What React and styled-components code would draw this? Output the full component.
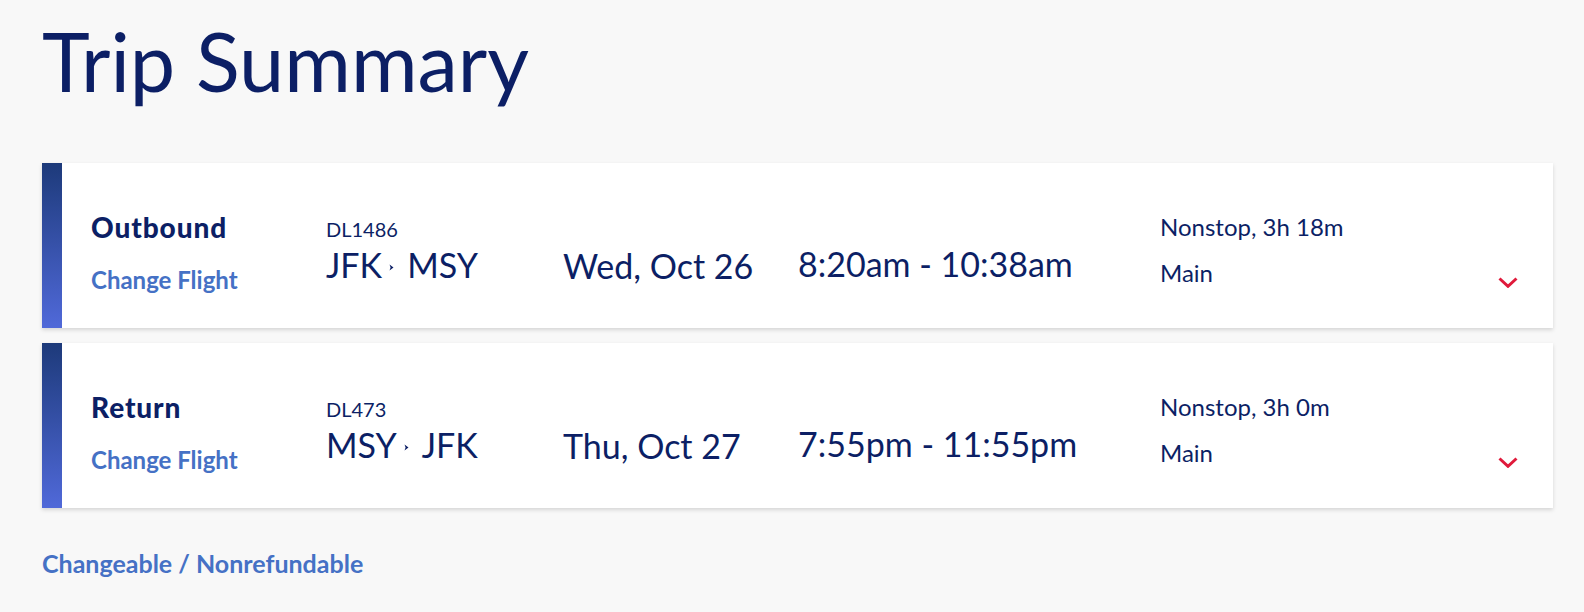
import React from 'react';
import styled, { createGlobalStyle } from 'styled-components';

const GlobalStyle = createGlobalStyle`
  html, body {
    margin: 0;
    padding: 0;
    background: #f8f8f8;
  }
  body {
    font-family: Lato, "Open Sans", sans-serif;
    color: #0c1f65;
  }
`;

const Page = styled.div`
  padding: 13px 31px 0 42px;
`;

const Title = styled.h1`
  margin: 0 0 54px;
  font-size: 81px;
  line-height: 96px;
  font-weight: 400;
  color: #0c1f65;
`;

const CardList = styled.div`
  display: flex;
  flex-direction: column;
  gap: 15px;
`;

const Card = styled.div`
  display: flex;
  min-height: 165px;
  background: #fff;
  box-shadow: 0 2px 4px rgba(0, 0, 0, 0.14);
`;

const Accent = styled.div`
  width: 20px;
  flex: none;
  background: linear-gradient(180deg, #1d3a7a 0%, #5069d9 100%);
`;

const Content = styled.div`
  flex: 1;
  display: grid;
  grid-template-columns: 235px 237px 235px 362px 1fr 20px;
  align-items: start;
  padding: 48px 35px 0 29px;
`;

const Column = styled.div`
  display: flex;
  flex-direction: column;
  padding-top: ${({ offset }) => offset || 0}px;
`;

const Direction = styled.div`
  font-size: 28px;
  line-height: 32px;
  font-weight: 900;
  letter-spacing: 0.9px;
`;

const ChangeLink = styled.a`
  margin-top: 22px;
  font-size: 24px;
  line-height: 30px;
  font-weight: 700;
  color: #4571c5;
  text-decoration: none;
  cursor: pointer;
`;

const FlightNo = styled.div`
  margin-top: 6px;
  font-size: 20px;
  line-height: 24px;
`;

const Route = styled.div`
  display: flex;
  align-items: center;
  margin-top: 4px;
  font-size: 34px;
  line-height: 40px;
`;

const RouteArrow = styled.svg`
  width: 5px;
  height: 7px;
  margin: 5px 13px 0 7px;
  flex: none;
`;

const BigText = styled.div`
  font-size: 34px;
  line-height: 40px;
  white-space: nowrap;
`;

const InfoText = styled.div`
  margin-top: ${({ gap }) => gap}px;
  font-size: 24px;
  line-height: 28px;
  white-space: nowrap;
`;

const Chevron = styled.svg`
  width: 20px;
  height: 11px;
  margin-top: 66px;
  cursor: pointer;
`;

const Fare = styled.a`
  display: block;
  margin-top: 40px;
  font-size: 25px;
  line-height: 30px;
  font-weight: 700;
  color: #4571c5;
  text-decoration: none;
`;

const flights = [
  {
    label: 'Outbound',
    number: 'DL1486',
    from: 'JFK',
    to: 'MSY',
    date: 'Wed, Oct 26',
    time: '8:20am - 10:38am',
    duration: 'Nonstop, 3h 18m',
    cabin: 'Main',
  },
  {
    label: 'Return',
    number: 'DL473',
    from: 'MSY',
    to: 'JFK',
    date: 'Thu, Oct 27',
    time: '7:55pm - 11:55pm',
    duration: 'Nonstop, 3h 0m',
    cabin: 'Main',
  },
];

function FlightCard({ flight }) {
  return (
    <Card>
      <Accent />
      <Content>
        <Column>
          <Direction>{flight.label}</Direction>
          <ChangeLink>Change Flight</ChangeLink>
        </Column>
        <Column>
          <FlightNo>{flight.number}</FlightNo>
          <Route>
            {flight.from}
            <RouteArrow viewBox="0 0 5 7">
              <path d="M0.5 0.5 L4.5 3.5 L0.5 6.5 L1.6 3.5 Z" fill="#0c1f65" />
            </RouteArrow>
            {flight.to}
          </Route>
        </Column>
        <Column offset={35}>
          <BigText>{flight.date}</BigText>
        </Column>
        <Column offset={33}>
          <BigText>{flight.time}</BigText>
        </Column>
        <Column>
          <InfoText gap={2}>{flight.duration}</InfoText>
          <InfoText gap={18}>{flight.cabin}</InfoText>
        </Column>
        <Chevron viewBox="0 0 20 11">
          <polyline
            points="1.5,1.5 10,9.3 18.5,1.5"
            fill="none"
            stroke="#e01a3b"
            strokeWidth="3"
          />
        </Chevron>
      </Content>
    </Card>
  );
}

export default function App() {
  return (
    <>
      <GlobalStyle />
      <Page>
        <Title>Trip Summary</Title>
        <CardList>
          {flights.map((f) => (
            <FlightCard key={f.number} flight={f} />
          ))}
        </CardList>
        <Fare>Changeable / Nonrefundable</Fare>
      </Page>
    </>
  );
}
